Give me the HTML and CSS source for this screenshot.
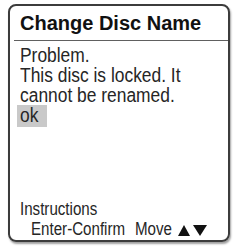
FILE: index.html
```html
<!DOCTYPE html>
<html>
<head>
<meta charset="utf-8">
<link rel="stylesheet" href="styles.css">
</head>
<body>
<div class="frame">
  <div class="title">Change Disc Name</div>
  <div class="rule"></div>
  <div class="message">
    <div class="line"><span class="t">Problem.</span></div>
    <div class="line"><span class="t">This disc is locked. It</span></div>
    <div class="line"><span class="t">cannot be renamed.</span></div>
    <div class="line"><span class="ok"><span class="t">ok</span></span></div>
  </div>
  <div class="instructions">
    <div class="ins-line"><span class="t small">Instructions</span></div>
    <div class="ins-line keys">
      <span class="confirm"><span class="t small">Enter-Confirm</span></span>
      <span class="move"><span class="t small">Move</span></span>
      <svg class="arrows" width="31" height="11" viewBox="0 0 31 11"><polygon points="0,11 6,0 12,11" fill="#111"/><polygon points="15,0 29,0 22,11" fill="#111"/></svg>
    </div>
  </div>
</div>
</body>
</html>
```
FILE: styles.css
```css
html, body {
  margin: 0;
  padding: 0;
  background: #ffffff;
}
body {
  width: 234px;
  height: 248px;
  overflow: hidden;
  font-family: "Liberation Sans", Arial, sans-serif;
  color: #262626;
}
.frame {
  box-sizing: border-box;
  margin: 4px 0 0 8px;
  width: 222px;
  height: 238px;
  border: 2px solid #3c3c3c;
  border-radius: 8px;
  box-shadow: 1px 2px 2px #a0a0a0;
  display: flex;
  flex-direction: column;
}
.title {
  font-weight: bold;
  font-size: 20px;
  line-height: 22px;
  padding: 6px 0 0 10px;
  height: 22px;
  color: #111;
  white-space: nowrap;
}
.rule {
  height: 1px;
  background: #606060;
  margin: 6px 0 0 4px;
}
.message {
  padding: 4px 0 0 10px;
  font-size: 20px;
  line-height: 20px;
}
.line {
  height: 20px;
  white-space: nowrap;
}
.t {
  display: inline-block;
  transform: scaleX(0.87);
  transform-origin: left center;
  white-space: nowrap;
}
.t.small {
  transform: scaleX(0.84);
}
.ok {
  display: inline-block;
  box-sizing: border-box;
  background: #c9c9c9;
  width: 30px;
  height: 22px;
  margin-left: -3px;
  padding-left: 3px;
  vertical-align: top;
}
.instructions {
  margin-top: auto;
  padding: 0 0 1px 10px;
  font-size: 18px;
  line-height: 20px;
}
.ins-line {
  height: 20px;
  white-space: nowrap;
}
.keys {
  display: flex;
  align-items: flex-start;
  padding-left: 11px;
}
.confirm {
  width: 104px;
  flex: none;
}
.move {
  width: 43px;
  flex: none;
}
.arrows {
  flex: none;
  margin-top: 6px;
}
```
